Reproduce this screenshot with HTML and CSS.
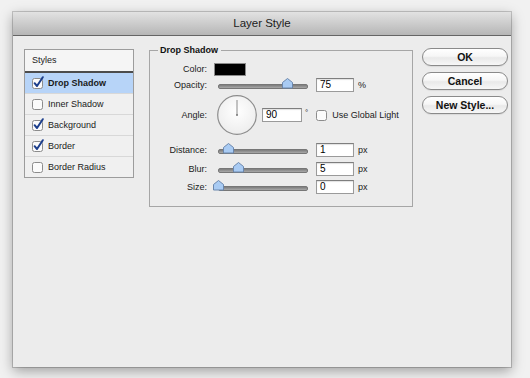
FILE: index.html
```html
<!DOCTYPE html>
<html>
<head>
<meta charset="utf-8">
<title>Layer Style</title>
<link rel="stylesheet" href="styles.css">
</head>
<body>
<div class="window">
  <div class="titlebar">Layer Style</div>
  <div class="content">
    <div class="styles">
      <div class="styles-head">Styles</div>
      <div class="item selected">
        <svg class="cb" width="12" height="12" viewBox="0 0 12 12"><rect x="0.5" y="1.5" width="10" height="10" rx="2" class="cb-box"/><path d="M2.6 6.2 L5 9 L10.8 0.2" class="cb-check"/></svg>
        <span class="item-label strong">Drop Shadow</span>
      </div>
      <div class="item">
        <svg class="cb" width="12" height="12" viewBox="0 0 12 12"><rect x="0.5" y="1.5" width="10" height="10" rx="2" class="cb-box"/></svg>
        <span class="item-label">Inner Shadow</span>
      </div>
      <div class="item">
        <svg class="cb" width="12" height="12" viewBox="0 0 12 12"><rect x="0.5" y="1.5" width="10" height="10" rx="2" class="cb-box"/><path d="M2.6 6.2 L5 9 L10.8 0.2" class="cb-check"/></svg>
        <span class="item-label">Background</span>
      </div>
      <div class="item">
        <svg class="cb" width="12" height="12" viewBox="0 0 12 12"><rect x="0.5" y="1.5" width="10" height="10" rx="2" class="cb-box"/><path d="M2.6 6.2 L5 9 L10.8 0.2" class="cb-check"/></svg>
        <span class="item-label">Border</span>
      </div>
      <div class="item last">
        <svg class="cb" width="12" height="12" viewBox="0 0 12 12"><rect x="0.5" y="1.5" width="10" height="10" rx="2" class="cb-box"/></svg>
        <span class="item-label">Border Radius</span>
      </div>
    </div>

    <fieldset class="panel">
      <legend class="panel-title">Drop Shadow</legend>

      <div class="row row-color">
        <span class="lbl">Color:</span>
        <span class="swatch"></span>
      </div>

      <div class="row row-opacity">
        <span class="lbl">Opacity:</span>
        <div class="slider">
          <svg class="thumb" style="left:64px" width="11" height="11" viewBox="0 0 11 11"><path d="M0.5 4.5 L5.5 0.5 L10.5 4.5 L10.5 10 L0.5 10 Z" class="thumb-shape"/></svg>
        </div>
        <span class="field">75</span>
        <span class="unit">%</span>
      </div>

      <div class="row row-angle">
        <span class="lbl">Angle:</span>
        <svg class="dial" width="40" height="40" viewBox="0 0 40 40">
          <defs>
            <radialGradient id="dialfill" cx="50%" cy="40%" r="60%">
              <stop offset="0" stop-color="#ffffff"/>
              <stop offset="1" stop-color="#ededed"/>
            </radialGradient>
          </defs>
          <circle cx="20" cy="20" r="19.3" fill="url(#dialfill)" stroke="#8d8d8d" stroke-width="1.2"/>
          <line x1="20" y1="20" x2="20" y2="5" stroke="#8a8a8a" stroke-width="1"/>
          <circle cx="20" cy="20" r="1" fill="#777"/>
        </svg>
        <span class="field field-angle">90</span>
        <span class="deg">°</span>
        <svg class="cb cb-global" width="12" height="12" viewBox="0 0 12 12"><rect x="0.5" y="1.5" width="10" height="10" rx="2" class="cb-box"/></svg>
        <span class="check-text">Use Global Light</span>
      </div>

      <div class="row row-distance">
        <span class="lbl">Distance:</span>
        <div class="slider">
          <svg class="thumb" style="left:5px" width="11" height="11" viewBox="0 0 11 11"><path d="M0.5 4.5 L5.5 0.5 L10.5 4.5 L10.5 10 L0.5 10 Z" class="thumb-shape"/></svg>
        </div>
        <span class="field">1</span>
        <span class="unit">px</span>
      </div>

      <div class="row row-blur">
        <span class="lbl">Blur:</span>
        <div class="slider">
          <svg class="thumb" style="left:15px" width="11" height="11" viewBox="0 0 11 11"><path d="M0.5 4.5 L5.5 0.5 L10.5 4.5 L10.5 10 L0.5 10 Z" class="thumb-shape"/></svg>
        </div>
        <span class="field">5</span>
        <span class="unit">px</span>
      </div>

      <div class="row row-size">
        <span class="lbl">Size:</span>
        <div class="slider">
          <svg class="thumb" style="left:-5px" width="11" height="11" viewBox="0 0 11 11"><path d="M0.5 4.5 L5.5 0.5 L10.5 4.5 L10.5 10 L0.5 10 Z" class="thumb-shape"/></svg>
        </div>
        <span class="field">0</span>
        <span class="unit">px</span>
      </div>
    </fieldset>

    <div class="buttons">
      <button class="btn">OK</button>
      <button class="btn">Cancel</button>
      <button class="btn">New Style...</button>
    </div>
  </div>
</div>
</body>
</html>
```

FILE: styles.css
```css
html, body {
  margin: 0;
  padding: 0;
}

body {
  background: #f1f1f1;
  font-family: "Liberation Sans", Arial, sans-serif;
  color: #1a1a1a;
  padding: 12px 0 0 13px;
  height: 378px;
  box-sizing: border-box;
  overflow: hidden;
}

.window {
  width: 498px;
  height: 355px;
  background: #ececec;
  box-shadow: 0 0 0 1px rgba(0, 0, 0, 0.18), 0 4px 12px rgba(0, 0, 0, 0.35);
  display: flex;
  flex-direction: column;
}

.titlebar {
  flex: none;
  height: 23px;
  line-height: 23px;
  border-bottom: 1px solid #656565;
  background: linear-gradient(#e2e2e2, #b6b6b6);
  text-align: center;
  font-size: 11.5px;
  color: #1c1c1c;
}

.content {
  display: flex;
  align-items: flex-start;
  padding-left: 11px;
}

/* Styles list */
.styles {
  margin-top: 13px;
  width: 108px;
  border: 1px solid #9c9c9c;
  background: #f0f0f0;
  font-size: 9px;
}

.styles-head {
  height: 21px;
  line-height: 21px;
  padding-left: 7px;
  background: #f5f5f5;
  border-bottom: 2px solid #4c4c4c;
  color: #222;
}

.item {
  height: 20px;
  border-bottom: 1px solid #d8d8d8;
  display: flex;
  align-items: center;
  padding-left: 7px;
  gap: 4px;
}

.item.last {
  border-bottom: none;
}

.item.selected {
  background: #b7d4f8;
}

.item-label {
  color: #1a1a1a;
}

.strong {
  font-weight: bold;
}

.cb {
  flex: none;
  overflow: visible;
}

.cb-box {
  fill: #fbfbfb;
  stroke: #8c8c8c;
  stroke-width: 1;
}

.cb-check {
  fill: none;
  stroke: #1c3e8c;
  stroke-width: 2;
  stroke-linecap: round;
  stroke-linejoin: round;
}

/* Drop shadow panel */
.panel {
  box-sizing: border-box;
  width: 264px;
  margin: 9px 0 0 15px;
  padding: 6px 0 12px 0;
  border: 1px solid #a6a6a6;
  min-width: 0;
  font-size: 9px;
}

.panel-title {
  margin-left: 8px;
  padding: 0 3px 0 2px;
  font-weight: bold;
  font-size: 9px;
  line-height: 11px;
  color: #111;
}

.row {
  display: flex;
  align-items: center;
  height: 14px;
}

.row-opacity { margin-top: 2px; }
.row-angle { margin-top: 3px; height: 40px; }
.row-distance { margin-top: 8px; }
.row-blur { margin-top: 5px; }
.row-size { margin-top: 4px; }

.lbl {
  flex: none;
  width: 57px;
  text-align: right;
  color: #1a1a1a;
}

.swatch {
  margin-left: 7px;
  width: 30px;
  height: 11px;
  background: #000;
  border: 1px solid #8a8a8a;
}

.slider {
  position: relative;
  flex: none;
  width: 90px;
  height: 14px;
  margin-left: 11px;
}

.slider::before {
  content: "";
  position: absolute;
  left: 0;
  right: 0;
  top: 6px;
  height: 3px;
  border-radius: 2px;
  background: linear-gradient(#7c7c7c, #a9a9a9);
  border: 0.5px solid #777;
}

.thumb {
  position: absolute;
  top: 0;
}

.thumb-shape {
  fill: #a9cbf3;
  stroke: #6b87ad;
  stroke-width: 1;
  stroke-linejoin: round;
}

.field {
  flex: none;
  box-sizing: border-box;
  width: 38px;
  height: 14px;
  margin-left: 8px;
  padding-left: 3px;
  background: #fff;
  border: 1px solid #9a9a9a;
  border-top-color: #7e7e7e;
  box-shadow: inset 0 1px 1px rgba(0, 0, 0, 0.12);
  font-size: 10px;
  line-height: 12px;
  color: #000;
}

.unit {
  margin-left: 4px;
}

.dial {
  flex: none;
  margin-left: 10px;
}

.field-angle {
  width: 40px;
  margin-left: 5px;
}

.deg {
  margin-left: 3px;
  align-self: center;
  position: relative;
  top: -3px;
  font-size: 8px;
}

.cb-global {
  margin-left: 8px;
}

.check-text {
  margin-left: 4px;
}

/* Buttons */
.buttons {
  margin: 12px 0 0 9px;
  width: 86px;
  display: flex;
  flex-direction: column;
  gap: 6px;
}

.btn {
  box-sizing: border-box;
  width: 86px;
  height: 18px;
  padding: 0;
  border: 1px solid #8a8a8a;
  border-radius: 9px;
  background: linear-gradient(#ffffff 0%, #f6f6f6 45%, #e9e9e9 55%, #f7f7f7 100%);
  font-family: "Liberation Sans", Arial, sans-serif;
  font-size: 10.5px;
  font-weight: bold;
  color: #111;
  line-height: 16px;
  box-shadow: 0 1px 1px rgba(0, 0, 0, 0.08);
}
```
